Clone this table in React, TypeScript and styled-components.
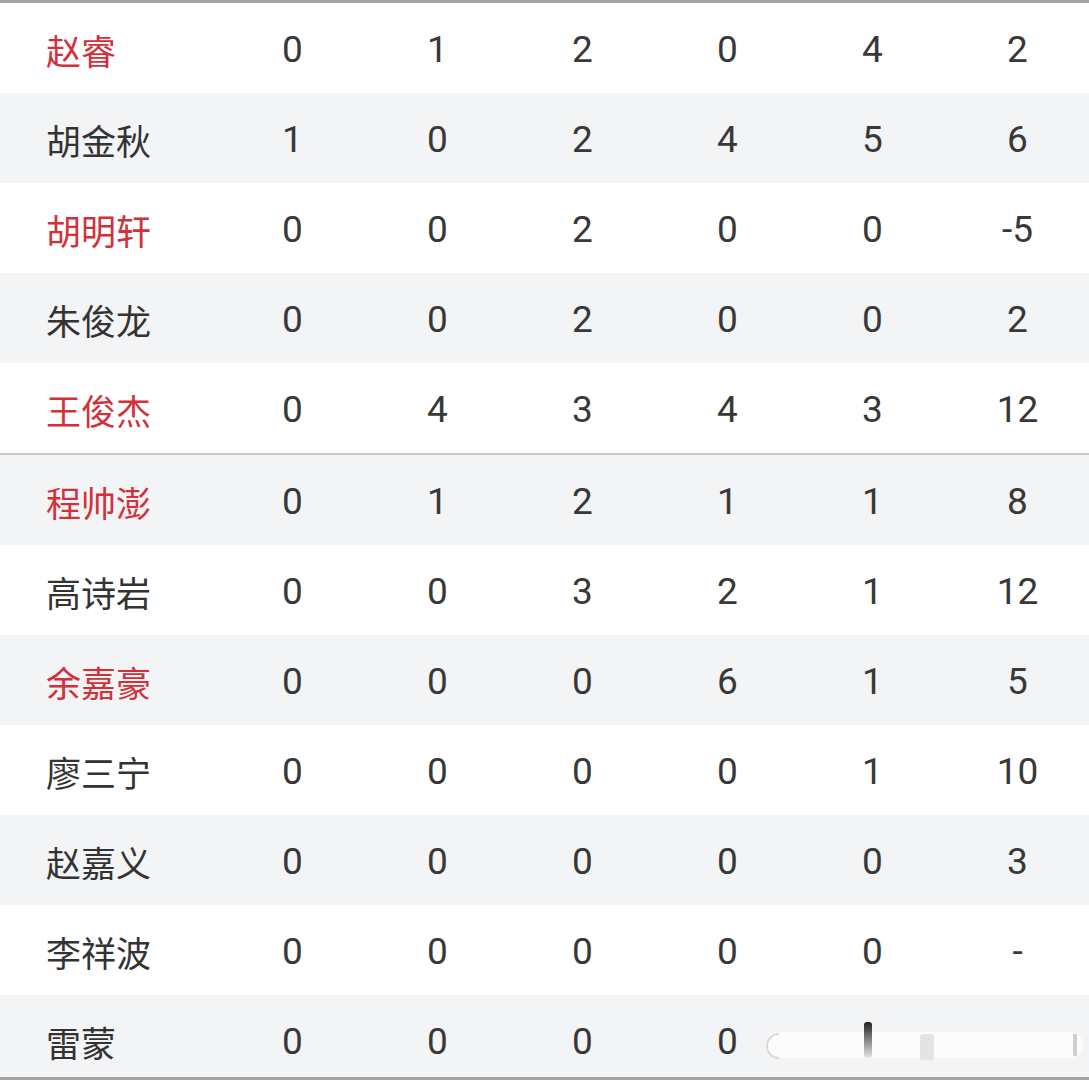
import * as React from 'react';
import styled, { createGlobalStyle } from 'styled-components';

type Player = {
  name: string;
  highlighted?: boolean;
  values: string[];
};

const firstGroup: Player[] = [
  { name: '赵睿', highlighted: true, values: ['0', '1', '2', '0', '4', '2'] },
  { name: '胡金秋', values: ['1', '0', '2', '4', '5', '6'] },
  { name: '胡明轩', highlighted: true, values: ['0', '0', '2', '0', '0', '-5'] },
  { name: '朱俊龙', values: ['0', '0', '2', '0', '0', '2'] },
  { name: '王俊杰', highlighted: true, values: ['0', '4', '3', '4', '3', '12'] },
];

const secondGroup: Player[] = [
  { name: '程帅澎', highlighted: true, values: ['0', '1', '2', '1', '1', '8'] },
  { name: '高诗岩', values: ['0', '0', '3', '2', '1', '12'] },
  { name: '余嘉豪', highlighted: true, values: ['0', '0', '0', '6', '1', '5'] },
  { name: '廖三宁', values: ['0', '0', '0', '0', '1', '10'] },
  { name: '赵嘉义', values: ['0', '0', '0', '0', '0', '3'] },
  { name: '李祥波', values: ['0', '0', '0', '0', '0', '-'] },
  { name: '雷蒙', values: ['0', '0', '0', '0', '', ''] },
];

const GlobalStyle = createGlobalStyle`
  html, body {
    margin: 0;
    padding: 0;
    background: #ffffff;
  }
  body {
    font-family: Roboto, "Noto Sans CJK SC", sans-serif;
  }
`;

const Page = styled.div`
  position: relative;
  width: 1089px;
  height: 1080px;
  overflow: hidden;
  background: #ffffff;
  border-top: 3px solid #a3a3a3;
  box-sizing: border-box;

  /* bottom edge line drawn over the clipped last row */
  &::after {
    content: '';
    position: absolute;
    left: 0;
    right: 0;
    bottom: 0;
    height: 3px;
    background: #a3a3a3;
  }
`;

const Group = styled.div<{ $divider?: boolean }>`
  display: flex;
  flex-direction: column;
  border-top: ${({ $divider }) => ($divider ? '2px solid #c9c9cc' : 'none')};
`;

const Row = styled.div<{ $shaded: boolean }>`
  display: grid;
  grid-template-columns: 220px repeat(6, 145px);
  align-items: center;
  flex: 0 0 90px;
  height: 90px;
  padding-top: 2px;
  box-sizing: border-box;
  background: ${({ $shaded }) => ($shaded ? '#f3f4f6' : '#ffffff')};
`;

const Name = styled.div<{ $highlighted?: boolean }>`
  padding-left: 46px;
  font-family: "Noto Sans CJK SC", sans-serif;
  font-size: 35px;
  line-height: 1;
  color: ${({ $highlighted }) => ($highlighted ? '#d3303a' : '#333333')};
`;

const Value = styled.div`
  text-align: center;
  font-family: Roboto, sans-serif;
  font-size: 37px;
  line-height: 1;
  color: #383838;
`;

const Watermark = styled.svg`
  position: absolute;
  right: 0;
  bottom: 0;
  pointer-events: none;
`;

const PlayerRow = ({ player, shaded }: { player: Player; shaded: boolean }): JSX.Element => (
  <Row $shaded={shaded}>
    <Name $highlighted={player.highlighted}>{player.name}</Name>
    {player.values.map((v, i) => (
      <Value key={`${player.name}-${i}`}>{v}</Value>
    ))}
  </Row>
);

const App = (): JSX.Element => (
  <>
    <GlobalStyle />
    <Page>
      <Group>
        {firstGroup.map((p, i) => (
          <PlayerRow key={p.name} player={p} shaded={i % 2 === 1} />
        ))}
      </Group>
      <Group $divider>
        {secondGroup.map((p, i) => (
          <PlayerRow key={p.name} player={p} shaded={i % 2 === 0} />
        ))}
      </Group>
      <Watermark width="330" height="60" viewBox="0 0 330 60">
        <defs>
          <linearGradient id="bar" x1="0" y1="0" x2="0" y2="1">
            <stop offset="0" stopColor="#222" />
            <stop offset="1" stopColor="#222" stopOpacity="0.1" />
          </linearGradient>
        </defs>
        <rect x="6" y="12" width="318" height="26" rx="13" fill="#ffffff" opacity="0.75" />
        <path d="M20 14 a12 12 0 0 0 0 24" fill="none" stroke="#d8d8d8" strokeWidth="2" />
        <rect x="105" y="2" width="8" height="36" rx="3" fill="url(#bar)" />
        <rect x="161" y="14" width="14" height="26" rx="3" fill="#e4e4e6" />
        <rect x="314" y="14" width="4" height="22" fill="#cfcfcf" />
      </Watermark>
    </Page>
  </>
);

export default App;
